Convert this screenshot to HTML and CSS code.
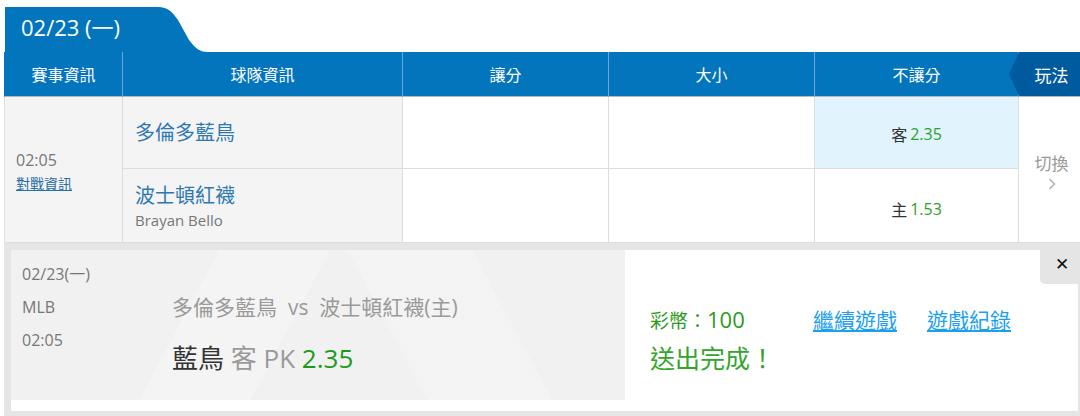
FILE: index.html
```html
<!DOCTYPE html>
<html lang="zh-Hant">
<head>
    <meta charset="UTF-8">
    <meta name="viewport" content="width=device-width, initial-scale=1.0">
    <title>投注單</title>
    <link rel="stylesheet" href="styles.css">
</head>
<body>
    <div class="board">
        <!-- 日期頁籤 -->
        <div class="date-tab">
            <span class="date-text">02/23 (一)</span>
            <svg class="tab-curve" width="52" height="45" viewBox="0 0 52 45">
                <path d="M0 0 H2 C12 0 16 5 22 13 L33 33 C40 42 44 45 52 45 H0 Z" fill="#0275bd"/>
            </svg>
        </div>

        <!-- 賽事表格 -->
        <div class="grid">
            <div class="th">賽事資訊</div>
            <div class="th">球隊資訊</div>
            <div class="th">讓分</div>
            <div class="th">大小</div>
            <div class="th">不讓分</div>
            <div class="th play">玩法</div>

            <div class="cell info">
                <span class="time">02:05</span>
                <a href="#" class="vs-link">對戰資訊</a>
            </div>
            <div class="cell team row1"><span class="team-name">多倫多藍鳥</span></div>
            <div class="cell odds row1"></div>
            <div class="cell odds row1"></div>
            <div class="cell odds row1 picked">客 <span class="rate">2.35</span></div>
            <div class="cell switch">
                <span>切換</span>
                <svg class="chev" width="8" height="12" viewBox="0 0 8 12">
                    <path d="M1.5 1 L6.5 6 L1.5 11" fill="none" stroke="#aaa" stroke-width="1.3"/>
                </svg>
            </div>

            <div class="cell team">
                <span class="team-name">波士頓紅襪</span>
                <span class="pitcher">Brayan Bello</span>
            </div>
            <div class="cell odds"></div>
            <div class="cell odds"></div>
            <div class="cell odds low">主 <span class="rate">1.53</span></div>
        </div>

        <!-- 投注完成 -->
        <div class="slip">
            <div class="slip-panel">
                <div class="ticket">
                    <div class="ticket-info">
                        <div>02/23(一)</div>
                        <div>MLB</div>
                        <div>02:05</div>
                    </div>
                    <div class="ticket-match">
                        <div class="match-line">多倫多藍鳥&nbsp; vs&nbsp; 波士頓紅襪(主)</div>
                        <div class="pick-line"><span class="pick-team">藍鳥</span> 客 PK <span class="pick-rate">2.35</span></div>
                    </div>
                </div>
                <div class="result">
                    <div class="result-top">
                        <span class="coins">彩幣：<span class="coins-num">100</span></span>
                        <a href="#" class="result-link">繼續遊戲</a>
                        <a href="#" class="result-link">遊戲紀錄</a>
                    </div>
                    <div class="done">送出完成！</div>
                </div>
            </div>
            <button type="button" class="close">&#10005;</button>
        </div>
    </div>
</body>
</html>
```
FILE: styles.css
```css
body {
    margin: 0;
    background: #ffffff;
    font-family: "Open Sans", "Noto Sans CJK TC", sans-serif;
    color: #333;
}
.board {
    padding-top: 7px;
    margin-left: 4px;
    width: 1076px;
}
.date-tab {
    display: flex;
    align-items: stretch;
    height: 45px;
}
.date-text {
    background: #0275bd;
    color: #fff;
    font-size: 22px;
    line-height: 41px;
    padding-left: 16px;
    width: 135px;
    margin-left: 1px;
}
.tab-curve {
    display: block;
}
.grid {
    display: grid;
    grid-template-columns: 119px 280px 206px 206px 204px 61px;
    grid-template-rows: 45px 72px 74px;
}
.th {
    background: #0275bd;
    color: #fff;
    font-size: 16px;
    display: flex;
    align-items: center;
    justify-content: center;
    border-right: 1px solid #6aa8d6;
    border-bottom: 1px solid #b9b9b9;
    box-sizing: border-box;
}
.th:first-child {
    border-left: 1px solid #0275bd;
}
.th.play {
    position: relative;
    background: #005a9e;
    border-right: none;
    font-size: 17px;
    padding-left: 4px;
}
.th.play::before {
    content: "";
    position: absolute;
    left: -10px;
    top: 0;
    border-top: 22px solid transparent;
    border-bottom: 22px solid transparent;
    border-right: 10px solid #005a9e;
}
.cell {
    box-sizing: border-box;
    border-right: 1px solid #dddddd;
    border-bottom: 1px solid #dddddd;
    background: #fff;
}
.cell.info {
    grid-row: 2 / 4;
    background: #f4f4f4;
    border-left: 1px solid #dddddd;
    display: flex;
    flex-direction: column;
    justify-content: center;
    padding-left: 11px;
    padding-top: 2px;
}
.time {
    color: #777;
    font-size: 16px;
    line-height: 26px;
}
.vs-link {
    color: #2a6fa8;
    font-size: 14px;
    line-height: 22px;
    text-decoration: underline;
}
.cell.team {
    background: #f4f4f4;
    display: flex;
    flex-direction: column;
    justify-content: center;
    padding-left: 12px;
    padding-top: 2px;
}
.cell.team.row1 {
    padding-top: 0;
}
.team-name {
    color: #2f79b3;
    font-size: 20px;
    line-height: 26px;
}
.pitcher {
    color: #777;
    font-size: 15px;
    line-height: 22px;
}
.cell.odds {
    display: flex;
    align-items: center;
    justify-content: center;
    font-size: 16px;
    color: #333;
    padding-top: 3px;
}
.cell.odds.low {
    padding-top: 6px;
}
.cell.picked {
    background: #e1f3fc;
}
.rate {
    color: #2ba22b;
    margin-left: 3px;
}
.cell.switch {
    grid-row: 2 / 4;
    grid-column: 6;
    border-right: none;
    display: flex;
    flex-direction: column;
    align-items: center;
    justify-content: center;
    color: #999;
    font-size: 17px;
    line-height: 22px;
    padding-left: 4px;
    padding-top: 4px;
}
.chev {
    display: block;
    margin-top: 3px;
}
.slip {
    position: relative;
    background: #e5e5e5;
    padding: 7px 2px 5px 7px;
}
.slip-panel {
    display: flex;
    background: #fff;
    height: 161px;
}
.ticket {
    width: 614px;
    height: 150px;
    display: flex;
    background:
        radial-gradient(circle at 5px 10px, #fff 5px, transparent 5.5px) left bottom / 10px 5px repeat-x,
        linear-gradient(118deg, transparent 30%, rgba(255, 255, 255, 0.22) 30%, rgba(255, 255, 255, 0.22) 46%, transparent 46%),
        linear-gradient(62deg, transparent 60%, rgba(255, 255, 255, 0.18) 60%, rgba(255, 255, 255, 0.18) 78%, transparent 78%),
        #f1f1f1;
}
.ticket-info {
    width: 161px;
    padding: 8px 0 0 11px;
    box-sizing: border-box;
    color: #777;
    font-size: 16px;
    line-height: 33px;
}
.ticket-match {
    padding-top: 41px;
}
.match-line {
    color: #9a9a9a;
    font-size: 21px;
    line-height: 33px;
}
.pick-line {
    margin-top: 14px;
    font-size: 26px;
    line-height: 40px;
    color: #9a9a9a;
}
.pick-team {
    color: #333;
}
.pick-rate {
    color: #1a9c1a;
}
.result {
    padding: 51px 0 0 25px;
}
.result-top {
    display: flex;
    align-items: center;
    height: 36px;
}
.coins {
    width: 163px;
    color: #2c9a1c;
    font-size: 19px;
}
.coins-num {
    font-size: 22px;
}
.result-link {
    color: #1c9ff0;
    font-size: 21px;
    text-decoration: underline;
    margin-right: 30px;
}
.done {
    color: #33a52a;
    font-size: 25px;
    line-height: 40px;
    margin-top: 1px;
}
.close {
    position: absolute;
    top: 0;
    right: 0;
    width: 40px;
    height: 41px;
    border: none;
    border-bottom-left-radius: 5px;
    background: #e5e5e5;
    color: #111;
    font-size: 17px;
    font-weight: bold;
    padding: 0 0 0 4px;
    cursor: pointer;
    font-family: "DejaVu Sans", sans-serif;
}
```
